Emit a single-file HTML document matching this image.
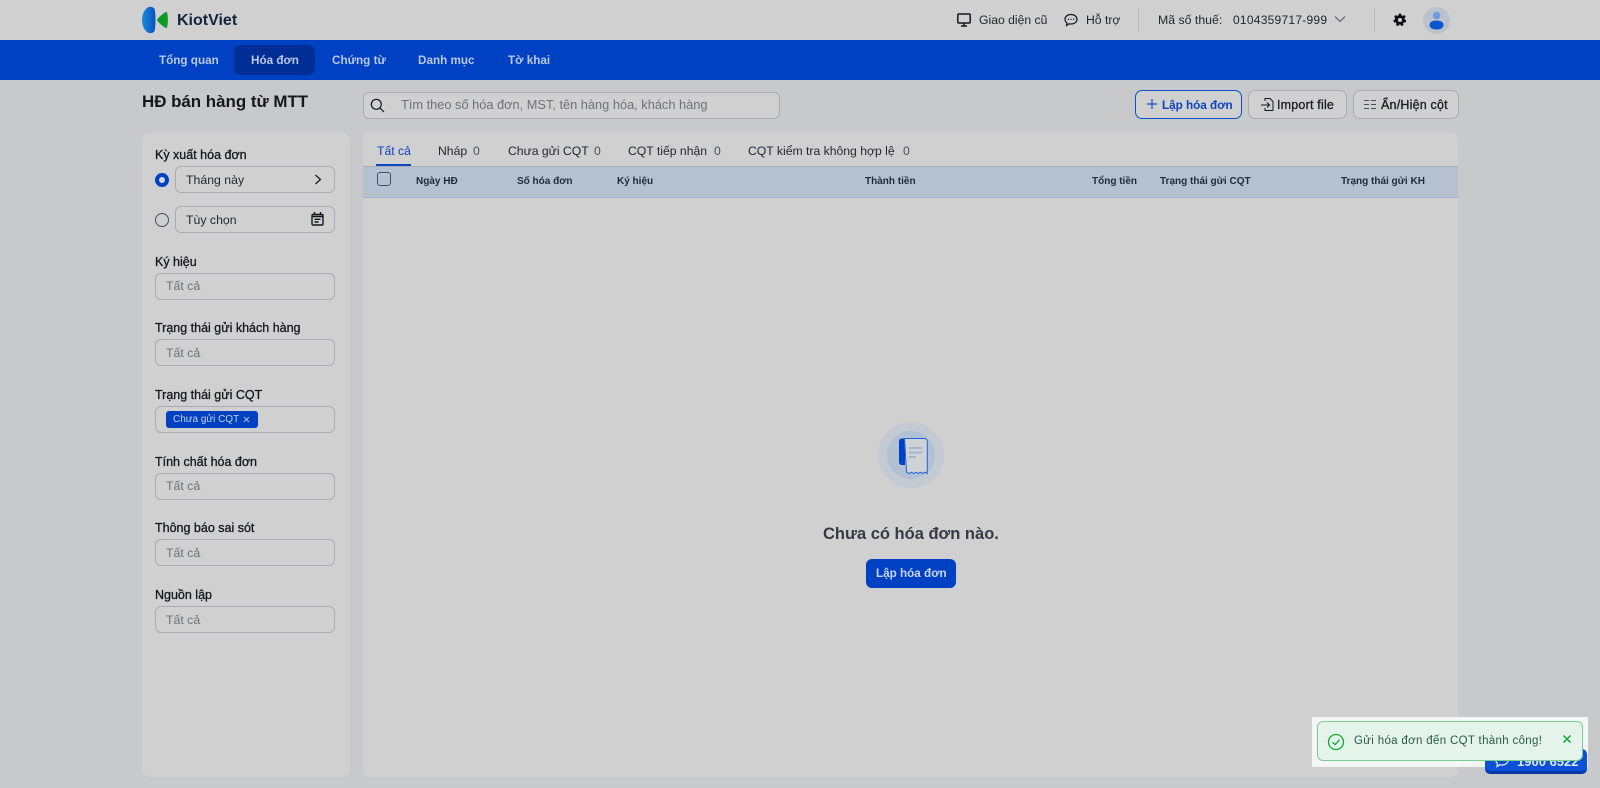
<!DOCTYPE html>
<html lang="vi"><head><meta charset="utf-8"><title>HĐ bán hàng từ MTT</title>
<style>
html,body{margin:0;padding:0;width:1600px;height:788px;overflow:hidden;background:#c8c9cb;font-family:"Liberation Sans",sans-serif;color:#1b1f26}
div,span,svg{position:absolute;white-space:nowrap;box-sizing:border-box}
.t{line-height:16px}
.lb{left:155px;font-size:12.5px;-webkit-text-stroke:.3px #14171c;line-height:16px;color:#14171c}
.inp{left:155px;width:180px;height:27px;border:1px solid #a9acb0;border-radius:6px;background:#d0d0d0}
.ph{left:166px;font-size:12.3px;color:#6d7278;line-height:16px}
.nav{top:53px;font-size:11.7px;font-weight:700;color:#b9c8e6;line-height:16px}
.th{top:174px;font-size:10px;font-weight:700;color:#1f2a3a;line-height:16px}
.tab{top:143px;font-size:12.2px;color:#1f2630;line-height:16px}
.btn{top:90px;height:29px;border:1px solid #a9acb0;border-radius:7px;background:#d0d0d0}
</style></head><body>
<div style="left:0;top:0;width:1600px;height:40px;background:#d0d0d0"></div>
<svg style="left:142px;top:6px" width="36" height="28" viewBox="0 0 36 28"><defs><linearGradient id="g" x1="0" x2="1"><stop offset="0" stop-color="#1a8fd8"/><stop offset="1" stop-color="#0a4fc0"/></linearGradient></defs><path d="M7 1C3 2 0 8 0 14s3 12 7 13c3 .6 5-.5 5.500-2 1.300-3 1.300-19 0-22C12 1.500 10 .5 7 1Z" fill="url(#g)"/><path d="M25 6.500c0-.6-.6-.7-1-.5-3 1.500-6 4-8.500 7-.6.700-.6 1.400 0 2 2.500 3 5.500 5.500 8.500 7 .4.200 1 .1 1-.5 1.200-4 1.200-11 0-15z" fill="#0d9a24"/></svg>
<div class="t" style="left:177px;top:12px;font-size:16px;font-weight:700;line-height:17px;color:#16233a">KiotViet</div>
<svg style="left:957px;top:13px" width="14" height="14" viewBox="0 0 14 14" fill="none" stroke="#14171c" stroke-width="1.500"><rect x=".8" y="1" width="12.400" height="9" rx="1"/><path d="M4 13h6M7 10v3"/></svg>
<div class="t" style="left:979px;top:12px;font-size:12.200px;color:#23272d">Giao diện cũ</div>
<svg style="left:1064px;top:13px" width="14" height="14" viewBox="0 0 14 14" fill="none" stroke="#14171c" stroke-width="1.200"><path d="M7 1.500c3.500 0 6 2 6 4.800S10.500 11 7 11c-.7 0-1.300-.1-2-.2L2.500 12.500l.4-2.600C1.700 9 1 7.800 1 6.300 1 3.500 3.500 1.500 7 1.500Z"/><path d="M3.900 6.300h1M6.500 6.300h1M9.100 6.300h1" stroke-width="1.400"/></svg>
<div class="t" style="left:1086px;top:12px;font-size:12.200px;color:#23272d">Hỗ trợ</div>
<div style="left:1138px;top:8px;width:1px;height:24px;background:#b8babd"></div>
<div class="t" style="left:1158px;top:12px;font-size:12.300px;color:#23272d">Mã số thuế:</div>
<div class="t" style="left:1233px;top:12px;font-size:12px;letter-spacing:.25px;color:#23272d">0104359717-999</div>
<svg style="left:1334px;top:15px" width="12" height="9" viewBox="0 0 12 9" fill="none" stroke="#55595f" stroke-width="1"><path d="M1 1.500l5 5 5-5"/></svg>
<div style="left:1374px;top:8px;width:1px;height:24px;background:#b8babd"></div>
<svg style="left:1393px;top:13px" width="14" height="14" viewBox="0 0 24 24"><path fill="#0c0d0f" fill-rule="evenodd" d="M14 1l.6 3 2.300 1 2.600-1.600 2.300 3.200-2.200 2.100.2 2.300 2.700 1.300-.9 3.900-3-.2-1.500 1.900 1 2.900-3.600 1.700-1.700-2.500h-2.400l-1.700 2.500-3.600-1.700 1-2.900-1.500-1.900-3 .2-.9-3.900 2.700-1.300.2-2.300L2.200 6.600l2.300-3.200 2.600 1.600 2.300-1L10 1zM12 8.500a3.500 3.500 0 1 0 0 7 3.500 3.500 0 0 0 0-7z"/></svg>
<div style="left:1423px;top:7px;width:27px;height:27px;border-radius:50%;background:#bcc2cc"></div>
<svg style="left:1428px;top:11px" width="17" height="19" viewBox="0 0 17 19"><circle cx="8.500" cy="4.500" r="3.800" fill="#6d9be0"/><path d="M1.500 14c0-3 3-4.500 7-4.500s7 1.500 7 4.500-3 4.500-7 4.500-7-1.500-7-4.500Z" fill="#0b55d0"/></svg>

<div style="left:0;top:40px;width:1600px;height:40px;background:#0041c4"></div>
<div style="left:234px;top:45px;width:81px;height:30px;background:#002d96;border-radius:7px"></div>
<div class="nav" style="left:159px">Tổng quan</div>
<div class="nav" style="left:251px">Hóa đơn</div>
<div class="nav" style="left:332px">Chứng từ</div>
<div class="nav" style="left:418px">Danh mục</div>
<div class="nav" style="left:508px">Tờ khai</div>

<div class="t" style="left:142px;top:93px;font-size:16.900px;font-weight:700;line-height:18px;color:#14171c">HĐ bán hàng từ MTT</div>
<div style="left:363px;top:92px;width:417px;height:27px;border:1px solid #a9acb0;border-radius:6px;background:#d0d0d0"></div>
<svg style="left:370px;top:98px" width="15" height="15" viewBox="0 0 15 15" fill="none" stroke="#14171c" stroke-width="1.200"><circle cx="6.300" cy="6.300" r="5"/><path d="M10 10l4 4"/></svg>
<div class="t" style="left:401px;top:97px;font-size:12.800px;color:#6d7278">Tìm theo số hóa đơn, MST, tên hàng hóa, khách hàng</div>

<div class="btn" style="left:1135px;width:107px;border-color:#0b50cc"></div>
<svg style="left:1146px;top:98px" width="12" height="12" viewBox="0 0 12 12" stroke="#0b4fc8" stroke-width="1.200"><path d="M6 1v10M1 6h10"/></svg>
<div class="t" style="left:1162px;top:98px;font-size:11.700px;font-weight:700;color:#0b45bf">Lập hóa đơn</div>
<div class="btn" style="left:1248px;width:99px"></div>
<svg style="left:1260px;top:97px" width="15" height="15" viewBox="0 0 15 15" fill="none" stroke="#14171c" stroke-width="1"><path d="M5 4V1.500h5l3 3v9H5V11"/><path d="M1 8h8M7 5.500L9.500 8 7 10.500"/></svg>
<div class="t" style="left:1277px;top:97px;font-size:12.500px;letter-spacing:.2px;-webkit-text-stroke:.3px #14171c">Import file</div>
<div class="btn" style="left:1353px;width:106px"></div>
<svg style="left:1364px;top:99px" width="12" height="11" viewBox="0 0 12 11" stroke="#4b5058" stroke-width="1"><path d="M0 1.500h5M7 1.500h5M0 5.500h5M7 5.500h5M0 9.500h5M7 9.500h5"/></svg>
<div class="t" style="left:1381px;top:97px;font-size:12.500px;letter-spacing:.2px;-webkit-text-stroke:.3px #14171c">Ẩn/Hiện cột</div>

<div style="left:142px;top:133px;width:208px;height:644px;background:#d0d0d0;border-radius:8px"></div>
<div class="lb" style="top:147px">Kỳ xuất hóa đơn</div>
<div style="left:155px;top:173px;width:14px;height:14px;border-radius:50%;border:4px solid #0041c4;background:#d8d8d8"></div>
<div class="inp" style="left:175px;top:166px;width:160px"></div>
<div class="ph" style="left:186px;top:172px;color:#23272d">Tháng này</div>
<svg style="left:314px;top:174px" width="8" height="11" viewBox="0 0 8 11" fill="none" stroke="#14171c" stroke-width="1.200"><path d="M1.500 1l5 4.500-5 4.500"/></svg>
<div style="left:155px;top:213px;width:14px;height:14px;border-radius:50%;border:1px solid #4a5058"></div>
<div class="inp" style="left:175px;top:206px;width:160px"></div>
<div class="ph" style="left:186px;top:212px;color:#23272d">Tùy chọn</div>
<svg style="left:311px;top:212px" width="13" height="14" viewBox="0 0 13 14" fill="none" stroke="#14171c" stroke-width="1.400"><rect x="1" y="2.500" width="11" height="10.500" rx="1"/><path d="M3.500 0v3M9.500 0v3M1 4.500h11"/><path d="M3.500 7.300h6M3.500 10h4"/></svg>

<div class="lb" style="top:254px">Ký hiệu</div>
<div class="inp" style="top:273px"></div><div class="ph" style="top:278px">Tất cả</div>
<div class="lb" style="top:320px">Trạng thái gửi khách hàng</div>
<div class="inp" style="top:339px"></div><div class="ph" style="top:345px">Tất cả</div>
<div class="lb" style="top:387px">Trạng thái gửi CQT</div>
<div class="inp" style="top:406px"></div>
<div style="left:166px;top:411px;width:92px;height:17px;background:#0041c4;border-radius:3px"></div>
<div class="t" style="left:173px;top:411px;font-size:10px;line-height:17px;color:#c4d0e8">Chưa gửi CQT</div>
<svg style="left:243px;top:416px" width="7" height="7" viewBox="0 0 7 7" stroke="#b0c0e0" stroke-width="1"><path d="M1 1l5 5M6 1L1 6"/></svg>
<div class="lb" style="top:454px">Tính chất hóa đơn</div>
<div class="inp" style="top:473px"></div><div class="ph" style="top:478px">Tất cả</div>
<div class="lb" style="top:520px">Thông báo sai sót</div>
<div class="inp" style="top:539px"></div><div class="ph" style="top:545px">Tất cả</div>
<div class="lb" style="top:587px">Nguồn lập</div>
<div class="inp" style="top:606px"></div><div class="ph" style="top:612px">Tất cả</div>

<div style="left:363px;top:133px;width:1095px;height:644px;background:#d0d0d0;border-radius:6px"></div>
<div class="tab" style="left:377px;color:#0b45bf">Tất cả</div>
<div style="left:376px;top:164px;width:35px;height:2px;background:#0b45bf"></div>
<div class="tab" style="left:438px">Nháp</div><div class="tab" style="left:473px;color:#4a5058">0</div>
<div class="tab" style="left:508px">Chưa gửi CQT</div><div class="tab" style="left:594px;color:#4a5058">0</div>
<div class="tab" style="left:628px">CQT tiếp nhận</div><div class="tab" style="left:714px;color:#4a5058">0</div>
<div class="tab" style="left:748px">CQT kiểm tra không hợp lệ</div><div class="tab" style="left:903px;color:#4a5058">0</div>
<div style="left:363px;top:166px;width:1095px;height:32px;background:#b5c1d1;border-top:1px solid #a8b0bc;border-bottom:1px solid #a9b6c9"></div>
<div style="left:377px;top:172px;width:14px;height:14px;border:1px solid #4a5058;border-radius:3px"></div>
<div class="th" style="left:416px">Ngày HĐ</div>
<div class="th" style="left:517px">Số hóa đơn</div>
<div class="th" style="left:617px">Ký hiệu</div>
<div class="th" style="left:865px">Thành tiền</div>
<div class="th" style="left:1092px">Tổng tiền</div>
<div class="th" style="left:1160px">Trạng thái gửi CQT</div>
<div class="th" style="left:1341px">Trạng thái gửi KH</div>

<div style="left:878px;top:422px;width:66px;height:66px;border-radius:50%;background:#c3cad4"></div>
<div style="left:887px;top:431px;width:48px;height:48px;border-radius:50%;background:#b1c0d3"></div>
<svg style="left:898px;top:436px" width="32" height="39" viewBox="0 0 32 39"><path d="M4 2.500h3v26.500H4c-2 0-3-1.500-3-3V5.500c0-2 1-3 3-3Z" fill="#0041c4"/><path d="M6.500 2.500H26c2 0 3.300 1.300 3.300 3.300V37.500l-2.300-1.300-2.300 1.300-2.300-1.300-2.300 1.300-2.300-1.300-2.300 1.300-2.300-1.300-2.300 1.300-2.300-1.300z" fill="#cfd2d6" stroke="#1f63da" stroke-width="1"/><rect x="11" y="11" width="13" height="2" fill="#a5b5cf"/><rect x="11" y="15.500" width="13" height="2" fill="#a5b5cf"/><rect x="11" y="20" width="7" height="2" fill="#a5b5cf"/></svg>
<div class="t" style="left:823px;top:524px;font-size:16.500px;font-weight:700;line-height:20px;color:#343b45">Chưa có hóa đơn nào.</div>
<div style="left:866px;top:559px;width:90px;height:29px;background:#0041c4;border-radius:6px"></div>
<div class="t" style="left:876px;top:566px;font-size:11.700px;font-weight:700;color:#c9d5ec">Lập hóa đơn</div>

<div style="left:1312px;top:717px;width:276px;height:50px;background:#f4f5f5"></div>
<div style="left:1485px;top:749px;width:102px;height:25px;background:#0a50d8;border-radius:5px;border-bottom:3px solid #0039a8"></div>
<svg style="left:1495px;top:755px" width="14" height="13" viewBox="0 0 14 13" fill="none" stroke="#dfe8f8" stroke-width="1.300"><path d="M7 1c3.300 0 6 1.900 6 4.500S10.300 10 7 10c-.7 0-1.300-.1-2-.2L2 11.500l.5-3C1.500 7.700 1 6.700 1 5.500 1 2.900 3.700 1 7 1Z"/></svg>
<div class="t" style="left:1517px;top:754px;font-size:13px;font-weight:700;color:#dfe8f8">1900 6522</div>
<div style="left:1317px;top:721px;width:266px;height:40px;background:#e4f4eb;border:1px solid #7ccb93;border-radius:6px"></div>
<svg style="left:1327px;top:733px" width="18" height="18" viewBox="0 0 18 18" fill="none" stroke="#0fa836" stroke-width="1.300"><circle cx="9" cy="9" r="7.500"/><path d="M5.500 9.200l2.500 2.500 4.500-5"/></svg>
<div class="t" style="left:1354px;top:733px;font-size:11.500px;letter-spacing:.33px;color:#2c5b40">Gửi hóa đơn đến CQT thành công!</div>
<svg style="left:1562px;top:734px" width="10" height="10" viewBox="0 0 10 10" stroke="#0fa836" stroke-width="1.500"><path d="M1.500 1.500l7 7M8.500 1.500l-7 7"/></svg>
</body></html>
